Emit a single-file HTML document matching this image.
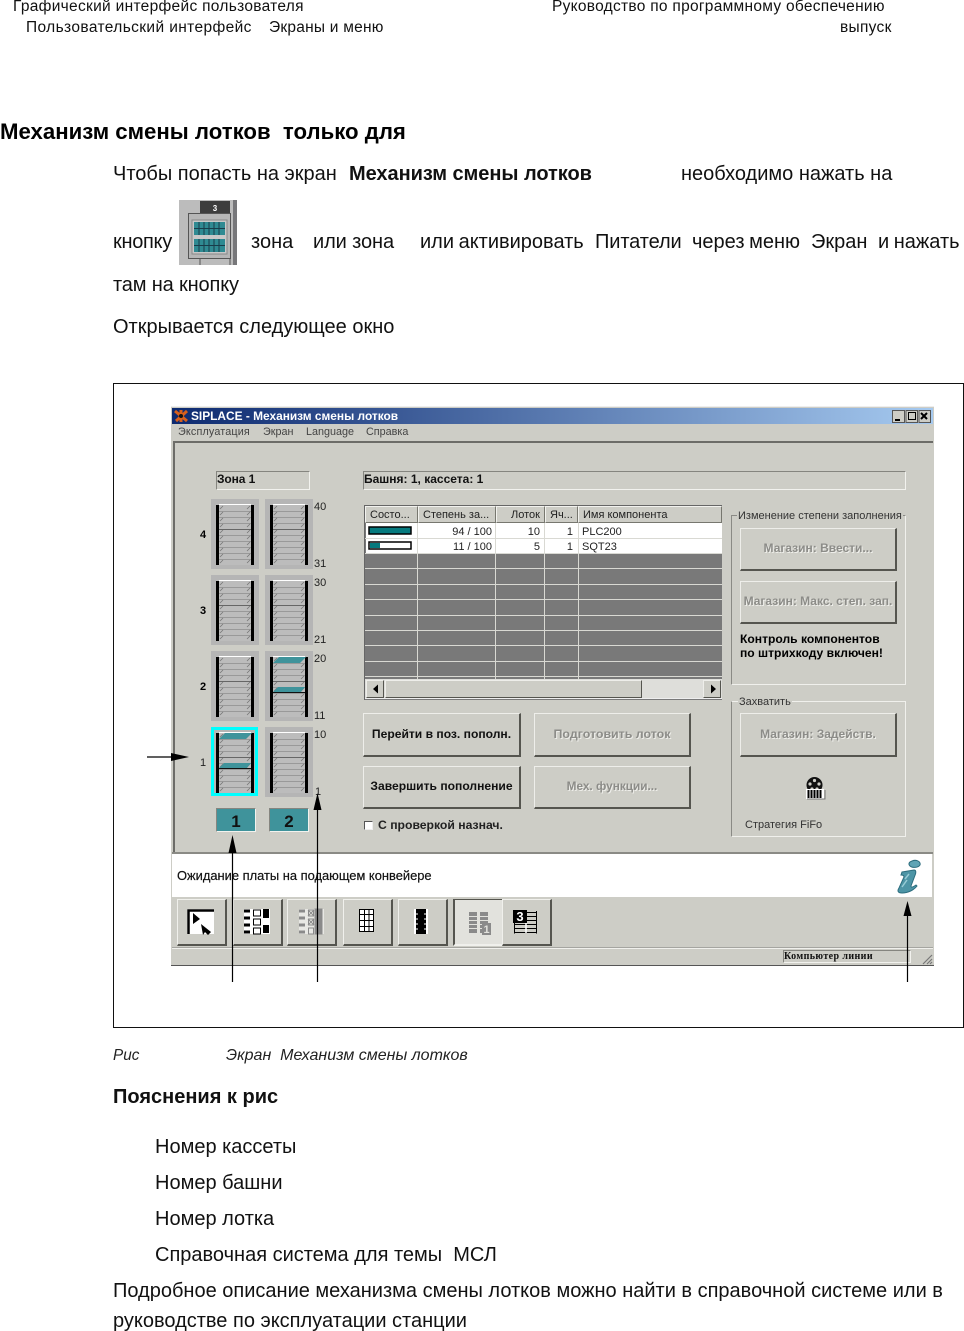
<!DOCTYPE html>
<html lang="ru"><head><meta charset="utf-8"><title>Механизм смены лотков</title>
<style>
html,body{margin:0;padding:0;background:#fff}
#p{position:relative;width:964px;height:1331px;overflow:hidden;background:#fff;font-family:"Liberation Sans",sans-serif;color:#000}
#p div{position:absolute;box-sizing:border-box}
.t{white-space:nowrap;line-height:14px;height:14px}
.b{font-size:20px;line-height:24px;height:24px;white-space:nowrap;color:#111}
.h{font-size:15.5px;line-height:18px;height:18px;white-space:nowrap;color:#111;letter-spacing:.3px}
.s{font-size:11px;color:#222}
.bd{font-weight:bold}
.btn{background:#cdcdc6;border-style:solid;border-width:1px 2px 2px 1px;border-color:#eeeeea #55554f #55554f #eeeeea}
.dis{font-size:12px;font-weight:bold;color:#8c8c88;text-shadow:1px 1px 0 #eeeeea;text-align:center;line-height:14px;white-space:nowrap}
.en{font-size:12.1px;font-weight:bold;color:#111;text-align:center;line-height:14px;white-space:nowrap}
.sun{border:1px solid;border-color:#85857f #f2f2ee #f2f2ee #85857f}
.tool{top:899px;height:47px;width:50px;background:#cdcdc6;border-style:solid;border-width:1px 2px 2px 1px;border-color:#f0f0ec #55554f #55554f #f0f0ec}
.hc{top:506px;height:17px;background:#cdcdc6;border:1px solid;border-color:#f2f2ee #77776f #77776f #f2f2ee;font-size:11px;line-height:16px;padding:0 4px;white-space:nowrap;color:#222}
.r{text-align:right}
</style></head><body><div id="p">

<div class="h" style="left:13px;top:-2px">Графический интерфейс пользователя</div>
<div class="h" style="left:26px;top:19px;letter-spacing:.38px">Пользовательский интерфейс</div>
<div class="h" style="left:269px;top:19px;letter-spacing:.23px">Экраны и меню</div>
<div class="h" style="left:552px;top:-2px;letter-spacing:.28px">Руководство по программному обеспечению</div>
<div class="h" style="left:840px;top:19px">выпуск</div>

<div class="b bd" style="left:0;top:120px;font-size:22.2px;color:#000">Механизм смены лотков&nbsp; только для</div>
<div class="b" style="left:113px;top:162px">Чтобы попасть на экран</div>
<div class="b bd" style="left:349px;top:162px;letter-spacing:-.05px">Механизм смены лотков</div>
<div class="b" style="left:681px;top:162px">необходимо нажать на</div>
<div class="b" style="left:113px;top:230px;letter-spacing:-.3px">кнопку</div>
<div class="b" style="left:251px;top:230px">зона</div>
<div class="b" style="left:313px;top:230px;letter-spacing:-.1px">или зона</div>
<div class="b" style="left:420px;top:230px;word-spacing:-1px">или активировать</div>
<div class="b" style="left:595px;top:230px;letter-spacing:-.1px">Питатели</div>
<div class="b" style="left:692px;top:230px;word-spacing:-1px">через меню</div>
<div class="b" style="left:811px;top:230px">Экран</div>
<div class="b" style="left:878px;top:230px;word-spacing:-1px">и нажать</div>
<div class="b" style="left:113px;top:273px;letter-spacing:-.15px">там на кнопку</div>
<div class="b" style="left:113px;top:315px">Открывается следующее окно</div>

<!-- button icon -->
<svg style="position:absolute;left:179px;top:200px" width="58" height="65" viewBox="0 0 58 65">
<rect width="58" height="65" fill="#bcbcbc"/><rect x="54" width="4" height="65" fill="#77777a"/>
<rect x="21" y="1" width="30" height="12" fill="#3d3d3d"/>
<text x="36" y="11" font-size="8" font-weight="bold" fill="#fff" text-anchor="middle" font-family="Liberation Sans">3</text>
<rect x="9.5" y="13.5" width="42" height="45" fill="#b6b6b6" stroke="#555"/>
<rect x="13" y="20" width="35" height="34" fill="#c8c8c8" stroke="#888"/>
<rect x="15" y="22" width="31" height="13" fill="#2f8a92"/><rect x="15" y="39" width="31" height="13" fill="#2f8a92"/>
<path d="M15 28.500H46M15 45.500H46M20 22V35M25 22V35M30 22V35M35 22V35M40 22V35M20 39V52M25 39V52M30 39V52M35 39V52M40 39V52" stroke="#123" stroke-width="1" opacity=".75"/>
<path d="M21 59V65M51 59V65" stroke="#555"/>
</svg>

<!-- figure frame -->
<div style="left:113px;top:383px;width:851px;height:645px;border:1px solid #111"></div>

<!-- window -->
<div style="left:171px;top:406px;width:763px;height:560px;background:#cdcdc6;border-top:1px solid #eee;border-bottom:1px solid #555"></div>
<div style="left:172px;top:408px;width:761px;height:16px;background:linear-gradient(90deg,#0d2a70,#a6caf0)"></div>
<svg style="position:absolute;left:174px;top:409px" width="15" height="14"><path d="M1 2L13 12M13 2L2 12M7 1V13" stroke="#d8601c" stroke-width="3"/><circle cx="7" cy="7" r="2" fill="#111"/></svg>
<div class="t bd" style="left:191px;top:409px;font-size:11.9px;color:#fff">SIPLACE - Механизм смены лотков</div>
<div style="left:892px;top:410px;width:39px;height:13px;background:#cdcdc6"></div>
<svg style="position:absolute;left:892px;top:410px" width="39" height="13"><path d="M0 12.500H12.500V0M0.500 12V0.500H12M13.500 12.500H25.500V0M14 12V.5H25M26.500 12.500H38.500V0M27 12V.5H38" fill="none" stroke="#555"/><path d="M3 10H8" stroke="#000" stroke-width="2"/><rect x="16.500" y="2.500" width="7" height="7" fill="none" stroke="#000"/><path d="M29 3L35 9M35 3L29 9" stroke="#000" stroke-width="2"/></svg>
<div class="t s" style="left:178px;top:425px;color:#444;letter-spacing:.15px;font-size:10.8px">Эксплуатация</div>
<div class="t s" style="left:263px;top:425px;color:#444;font-size:10.8px">Экран</div>
<div class="t s" style="left:306px;top:425px;color:#444;font-size:10.8px">Language</div>
<div class="t s" style="left:366px;top:425px;color:#444;font-size:10.8px">Справка</div>
<div style="left:173px;top:441px;width:760px;height:2px;background:#6c6c68"></div>
<div style="left:173px;top:441px;width:2px;height:411px;background:#6c6c68"></div>

<!-- fields -->
<div class="sun t bd" style="left:216px;top:471px;width:94px;height:19px;font-size:12px;line-height:15px;color:#111;letter-spacing:-.1px">Зона 1</div>
<div class="sun t bd" style="left:363px;top:471px;width:543px;height:19px;font-size:12px;line-height:15px;color:#111">Башня: 1, кассета: 1</div>

<!-- cassettes -->
<svg style="position:absolute;left:0;top:0" width="964" height="1331" viewBox="0 0 964 1331">
<defs>
<symbol id="c" viewBox="0 0 38 61" width="38" height="61">
<rect width="38" height="61" fill="#bcbcbc"/>
<path d="M3 .5H35" stroke="#fff"/>
<rect y="1" width="3" height="60" fill="#000"/><rect x="35" y="1" width="3" height="60" fill="#000"/>
<path d="M3 7.500H35M3 13.500H35M3 19.500H35M3 31.500H35M3 37.500H35M3 43.500H35M3 49.500H35M3 55.500H35" stroke="#999"/>
<path d="M3 25.500H35" stroke="#666"/>
<path d="M4 11L7 8M31 11L34 8M4 17L7 14M31 17L34 14M4 23L7 20M31 23L34 20M4 29L7 26M31 29L34 26M4 35L7 32M31 35L34 32M4 41L7 38M31 41L34 38M4 47L7 44M31 47L34 44M4 53L7 50M31 53L34 50M4 59L7 56M31 59L34 56M4 5L7 2M31 5L34 2" stroke="#777" stroke-width=".8"/>
</symbol>
<symbol id="ct" viewBox="0 0 38 61" width="38" height="61">
<use href="#c"/>
<path d="M3 7L9 1H36L30 7ZM3 36L8 31H35L31 36Z" fill="#3f939b"/>
<path d="M3 36.500H35" stroke="#111"/>
</symbol>
</defs>
<g fill="#b5b5b5">
<rect x="211" y="499" width="48" height="70"/><rect x="265" y="499" width="48" height="70"/>
<rect x="211" y="575" width="48" height="70"/><rect x="265" y="575" width="48" height="70"/>
<rect x="211" y="651" width="48" height="70"/><rect x="265" y="651" width="48" height="70"/>
<rect x="265" y="727" width="48" height="70"/>
</g>
<rect x="211" y="727" width="47" height="69" fill="#0ff"/><rect x="214" y="730" width="41" height="63" fill="#b5b5b5"/>
<use href="#c" x="216" y="504"/><use href="#c" x="270" y="504"/>
<use href="#c" x="216" y="580"/><use href="#c" x="270" y="580"/>
<use href="#c" x="216" y="656"/><use href="#ct" x="270" y="656"/>
<use href="#ct" x="216" y="732"/><use href="#c" x="270" y="732"/>
</svg>

<div class="t bd" style="left:200px;top:528px;font-size:11px">4</div>
<div class="t bd" style="left:200px;top:604px;font-size:11px">3</div>
<div class="t bd" style="left:200px;top:680px;font-size:11px">2</div>
<div class="t" style="left:200px;top:756px;font-size:11px;color:#222">1</div>
<div class="t s" style="left:314px;top:500px">40</div>
<div class="t s" style="left:314px;top:557px">31</div>
<div class="t s" style="left:314px;top:576px">30</div>
<div class="t s" style="left:314px;top:633px">21</div>
<div class="t s" style="left:314px;top:652px">20</div>
<div class="t s" style="left:314px;top:709px">11</div>
<div class="t s" style="left:314px;top:728px">10</div>
<div class="t s" style="left:315px;top:785px">1</div>

<div class="sun bd" style="left:216px;top:808px;width:40px;height:24px;background:#3f939b;font-size:17px;line-height:25px;text-align:center;color:#111">1</div>
<div class="sun bd" style="left:269px;top:808px;width:40px;height:24px;background:#3f939b;font-size:17px;line-height:25px;text-align:center;color:#111">2</div>

<!-- table -->
<div style="left:364px;top:505px;width:358px;height:195px;background:#797979;border-top:1px solid #666;border-left:1px solid #666"></div>
<div class="hc" style="left:365px;width:53px">Состо...</div>
<div class="hc" style="left:418px;width:78px">Степень за...</div>
<div class="hc r" style="left:496px;width:49px">Лоток</div>
<div class="hc" style="left:545px;width:33px">Яч...</div>
<div class="hc" style="left:578px;width:144px">Имя компонента</div>
<div style="left:366px;top:523px;width:356px;height:30px;background:#fff"></div>
<svg style="position:absolute;left:364px;top:523px" width="358" height="160">
<g stroke="#d9d9d3"><path d="M1 15.500H358M1 30.500H358M1 45.500H358M1 61.500H358M1 76.500H358M1 92.500H358M1 107.500H358M1 122.500H358M1 138.500H358M1 153.500H358"/><path d="M53.500 0V157M131.500 0V157M180.500 0V157M214.500 0V157"/></g>
<rect x="5" y="4" width="42" height="7" fill="#067a7e" stroke="#000" stroke-width="1.500"/>
<rect x="5" y="19" width="42" height="7" fill="#fff" stroke="#000" stroke-width="1.500"/><rect x="6" y="20" width="10" height="5" fill="#067a7e"/>
</svg>
<div class="t s r" style="left:420px;top:525px;width:72px">94 / 100</div>
<div class="t s r" style="left:500px;top:525px;width:40px">10</div>
<div class="t s r" style="left:550px;top:525px;width:23px">1</div>
<div class="t s" style="left:582px;top:525px">PLC200</div>
<div class="t s r" style="left:420px;top:540px;width:72px">11 / 100</div>
<div class="t s r" style="left:500px;top:540px;width:40px">5</div>
<div class="t s r" style="left:550px;top:540px;width:23px">1</div>
<div class="t s" style="left:582px;top:540px">SQT23</div>
<!-- scrollbar -->
<div style="left:365px;top:679px;width:357px;height:20px;background:#dededa;border-bottom:1px solid #eee"></div>
<div class="btn" style="left:366px;top:680px;width:18px;height:18px;border-width:1px"></div>
<div class="btn" style="left:385px;top:680px;width:257px;height:18px;border-width:1px"></div>
<div class="btn" style="left:703px;top:680px;width:18px;height:18px;border-width:1px"></div>
<svg style="position:absolute;left:366px;top:680px" width="356" height="18"><path d="M7 9L12 4.500V13.500Z M345 4.500L350 9L345 13.500Z"/></svg>

<!-- groups -->
<div style="left:731px;top:515px;width:175px;height:170px;border:1px solid #f0f0ec;border-top-color:#8a8a85;border-left-color:#8a8a85"></div>
<div class="t s" style="left:737px;top:509px;background:#cdcdc6;padding:0 1px;color:#333">Изменение степени заполнения</div>
<div class="btn dis" style="left:740px;top:528px;width:157px;height:43px;line-height:39px">Магазин: Ввести...</div>
<div class="btn dis" style="left:740px;top:581px;width:157px;height:43px;line-height:39px">Магазин: Макс. степ. зап.</div>
<div class="t bd" style="left:740px;top:632px;font-size:12.1px">Контроль компонентов</div>
<div class="t bd" style="left:740px;top:646px;font-size:12.1px">по штрихкоду включен!</div>

<div style="left:731px;top:701px;width:175px;height:136px;border:1px solid #f0f0ec;border-left-color:#8a8a85"></div>
<div class="t s" style="left:738px;top:695px;background:#cdcdc6;padding:0 1px;color:#333">Захватить</div>
<div class="btn dis" style="left:740px;top:713px;width:157px;height:44px;line-height:40px">Магазин: Задейств.</div>
<svg style="position:absolute;left:805px;top:776px" width="21" height="24"><circle cx="9.500" cy="9" r="8" fill="#111"/><g fill="#cfcfc8"><circle cx="9.500" cy="4.500" r="1.600"/><circle cx="5" cy="8" r="1.600"/><circle cx="14" cy="8" r="1.600"/><circle cx="7" cy="13" r="1.600"/><circle cx="12" cy="13" r="1.600"/></g><rect x="1" y="13" width="18" height="10" fill="#fff"/><path d="M3.500 14V22M6.500 14V22M9.500 14V22M12.500 14V22M15.500 14V22" stroke="#000" stroke-width="2"/><path d="M20 14V23H2" stroke="#777" fill="none"/></svg>
<div class="t s" style="left:745px;top:818px;color:#333">Стратегия FiFo</div>

<!-- main buttons -->
<div class="btn en" style="left:363px;top:713px;width:158px;height:44px;line-height:40px">Перейти в поз. пополн.</div>
<div class="btn dis" style="left:534px;top:713px;width:157px;height:44px;line-height:40px;font-size:12.4px">Подготовить лоток</div>
<div class="btn en" style="left:363px;top:766px;width:158px;height:43px;line-height:39px">Завершить пополнение</div>
<div class="btn dis" style="left:534px;top:766px;width:157px;height:43px;line-height:39px;font-size:11.8px">Мех. функции...</div>
<div style="left:364px;top:821px;width:9px;height:9px;background:#fff;border:1px solid #555;border-right-color:#eee;border-bottom-color:#eee"></div>
<div class="t bd" style="left:378px;top:818px;font-size:12.2px;color:#222">С проверкой назнач.</div>

<!-- status -->
<div style="left:172px;top:852px;width:761px;height:2px;background:#8a8a85"></div>
<div style="left:172px;top:854px;width:760px;height:43px;background:#fff"></div>
<div class="t" style="left:177px;top:869px;font-size:12.9px;color:#111;-webkit-text-stroke:.2px #111">Ожидание платы на подающем конвейере</div>
<svg style="position:absolute;left:896px;top:859px" width="26" height="36">
<path d="M16 2C21 0 25 3 24 6C22 9 16 9 14 7C12 5 13 3 16 2Z" fill="#5fa4b5" stroke="#2c6d7e"/>
<path d="M6 13L18 11C20 11 20 13 19.500 15L15 27C15 29 17 28 20 26L21 27C18 31 12 34 6 34C2 34 1 32 3 29L8 18C8 16 6 16 5 16Z" fill="#4d95a6" stroke="#2c6d7e"/>
<path d="M9 20L13 15M6 28L11 21" stroke="#98ccd6" stroke-width="1.500"/>
</svg>

<!-- toolbar -->
<div class="tool" style="left:177px"></div>
<div class="tool" style="left:233px"></div>
<div class="tool" style="left:287px"></div>
<div class="tool" style="left:343px"></div>
<div class="tool" style="left:398px"></div>
<div class="tool" style="left:453px;background:#e2e2dd;border-width:1px 1px 2px 2px;border-color:#55554f #f0f0ec #f0f0ec #55554f"></div>
<div class="tool" style="left:502px"></div>
<svg style="position:absolute;left:170px;top:899px" width="400" height="60">
<!-- 1 -->
<rect x="17" y="10" width="27" height="25" fill="#fff"/>
<path d="M18.500 35V11.500H44" fill="none" stroke="#000" stroke-width="2.500"/>
<path d="M23 14L30 20L23 25Z M31 25L41 33L38 36L35 33L33 36Z" fill="#000"/>
<!-- 2 -->
<g>
<rect x="74" y="10" width="26" height="25" fill="#fff"/>
<path d="M74 12H80M74 19H80M74 26H80M74 33H80" stroke="#000" stroke-width="3"/>
<path d="M93 10H99V19H93ZM93 26H99V34H93Z" fill="#000"/>
<path d="M83.500 11H90.500V17H83.500ZM83.500 20H90.500V26H83.500ZM83.500 29H90.500V35H83.500Z" fill="none" stroke="#000"/>
</g>
<!-- 3 -->
<rect x="129" y="10" width="25" height="25" fill="#e8e8e4"/>
<g stroke="#8a8a8a">
<path d="M129 12H135M129 19H135M129 26H135M129 33H135" stroke-width="3"/>
<rect x="145" y="10" width="7" height="25" fill="#8a8a8a"/>
<path d="M138.500 11H143.500V17H138.500ZM138.500 20H143.500V26H138.500ZM138.500 29H143.500V35H138.500Z M138 11L144 17M144 11L138 17M138 20L144 26M144 20L138 26" fill="none"/>
</g>
<!-- 4 -->
<rect x="189.500" y="10.500" width="14" height="22" fill="#fff" stroke="#000"/>
<path d="M194.500 10V33M199 10V33M189 15.500H204M189 21.500H204M189 27.500H204" stroke="#000"/>
<!-- 5 -->
<rect x="244" y="10" width="14" height="25" fill="#fff"/>
<rect x="246" y="10" width="10" height="25" fill="#000"/>
<path d="M246 15H248M254 15H256M246 20H248M254 20H256M246 25H248M254 25H256M246 30H248M254 30H256" stroke="#fff"/>
<!-- 6 -->
<g fill="#8a8a8a"><path d="M299 13H307V34H299ZM310 13H318V34H310Z"/></g>
<path d="M299 17.500H318M299 21.500H318M299 25.500H318M299 29.500H318" stroke="#e2e2dd"/>
<rect x="312" y="24" width="9" height="12" fill="#8a8a8a"/>
<!-- 7 -->
<g stroke="#000"><path d="M345 13.500H367M345 17.500H367M345 21.500H367M345 25.500H367M345 29.500H367M345 33.500H367"/><path d="M344.500 18V34.500M366.500 12V34.500"/><path d="M356 12V34" stroke="#fff" stroke-width="1.500"/></g>
<rect x="343" y="11" width="14" height="13" fill="#000"/>
</svg>
<div class="t bd" style="left:513px;top:910px;font-size:13px;color:#fff;width:14px;text-align:center">3</div>
<div class="t bd" style="left:482px;top:923px;font-size:11px;color:#e2e2dd;width:9px;text-align:center">1</div>

<!-- bottom status bar -->
<div style="left:172px;top:947px;width:761px;height:2px;background:#f0f0ec;border-top:1px solid #a5a5a0"></div>
<div class="sun t" style="left:783px;top:950px;width:128px;height:13px;font:bold 10px/11px 'Liberation Serif',serif;color:#111;letter-spacing:.4px">Компьютер линии</div>
<svg style="position:absolute;left:921px;top:953px" width="12" height="12"><path d="M11 2L2 11M11 6L6 11M11 9L9 11" stroke="#777" stroke-width="1.200"/></svg>

<!-- arrows -->
<svg style="position:absolute;left:0;top:0" width="964" height="1331" viewBox="0 0 964 1331">
<path d="M147 757H176M232.500 982V840M317.500 982V800M907.500 982V912" stroke="#000" stroke-width="1.200"/>
<path d="M171 753L189 757L171 761ZM232.500 835L228.500 853H236.500ZM317.500 793L313.500 810H321.500ZM907.500 901L903.500 916H911.500Z" fill="#000"/>
</svg>

<!-- below figure -->
<div class="t" style="left:113px;top:1048px;font-size:15.3px;height:16px;line-height:16px;font-style:italic;color:#222">Рис</div>
<div class="t" style="left:226px;top:1048px;font-size:16px;height:16px;line-height:16px;font-style:italic;color:#222">Экран&nbsp; Механизм смены лотков</div>
<div class="b bd" style="left:113px;top:1085px">Пояснения к рис</div>
<div class="b" style="left:155px;top:1135px">Номер кассеты</div>
<div class="b" style="left:155px;top:1171px">Номер башни</div>
<div class="b" style="left:155px;top:1207px">Номер лотка</div>
<div class="b" style="left:155px;top:1243px">Справочная система для темы&nbsp; МСЛ</div>
<div class="b" style="left:113px;top:1279px">Подробное описание механизма смены лотков можно найти в справочной системе или в</div>
<div class="b" style="left:113px;top:1309px">руководстве по эксплуатации станции</div>
</div></body></html>
